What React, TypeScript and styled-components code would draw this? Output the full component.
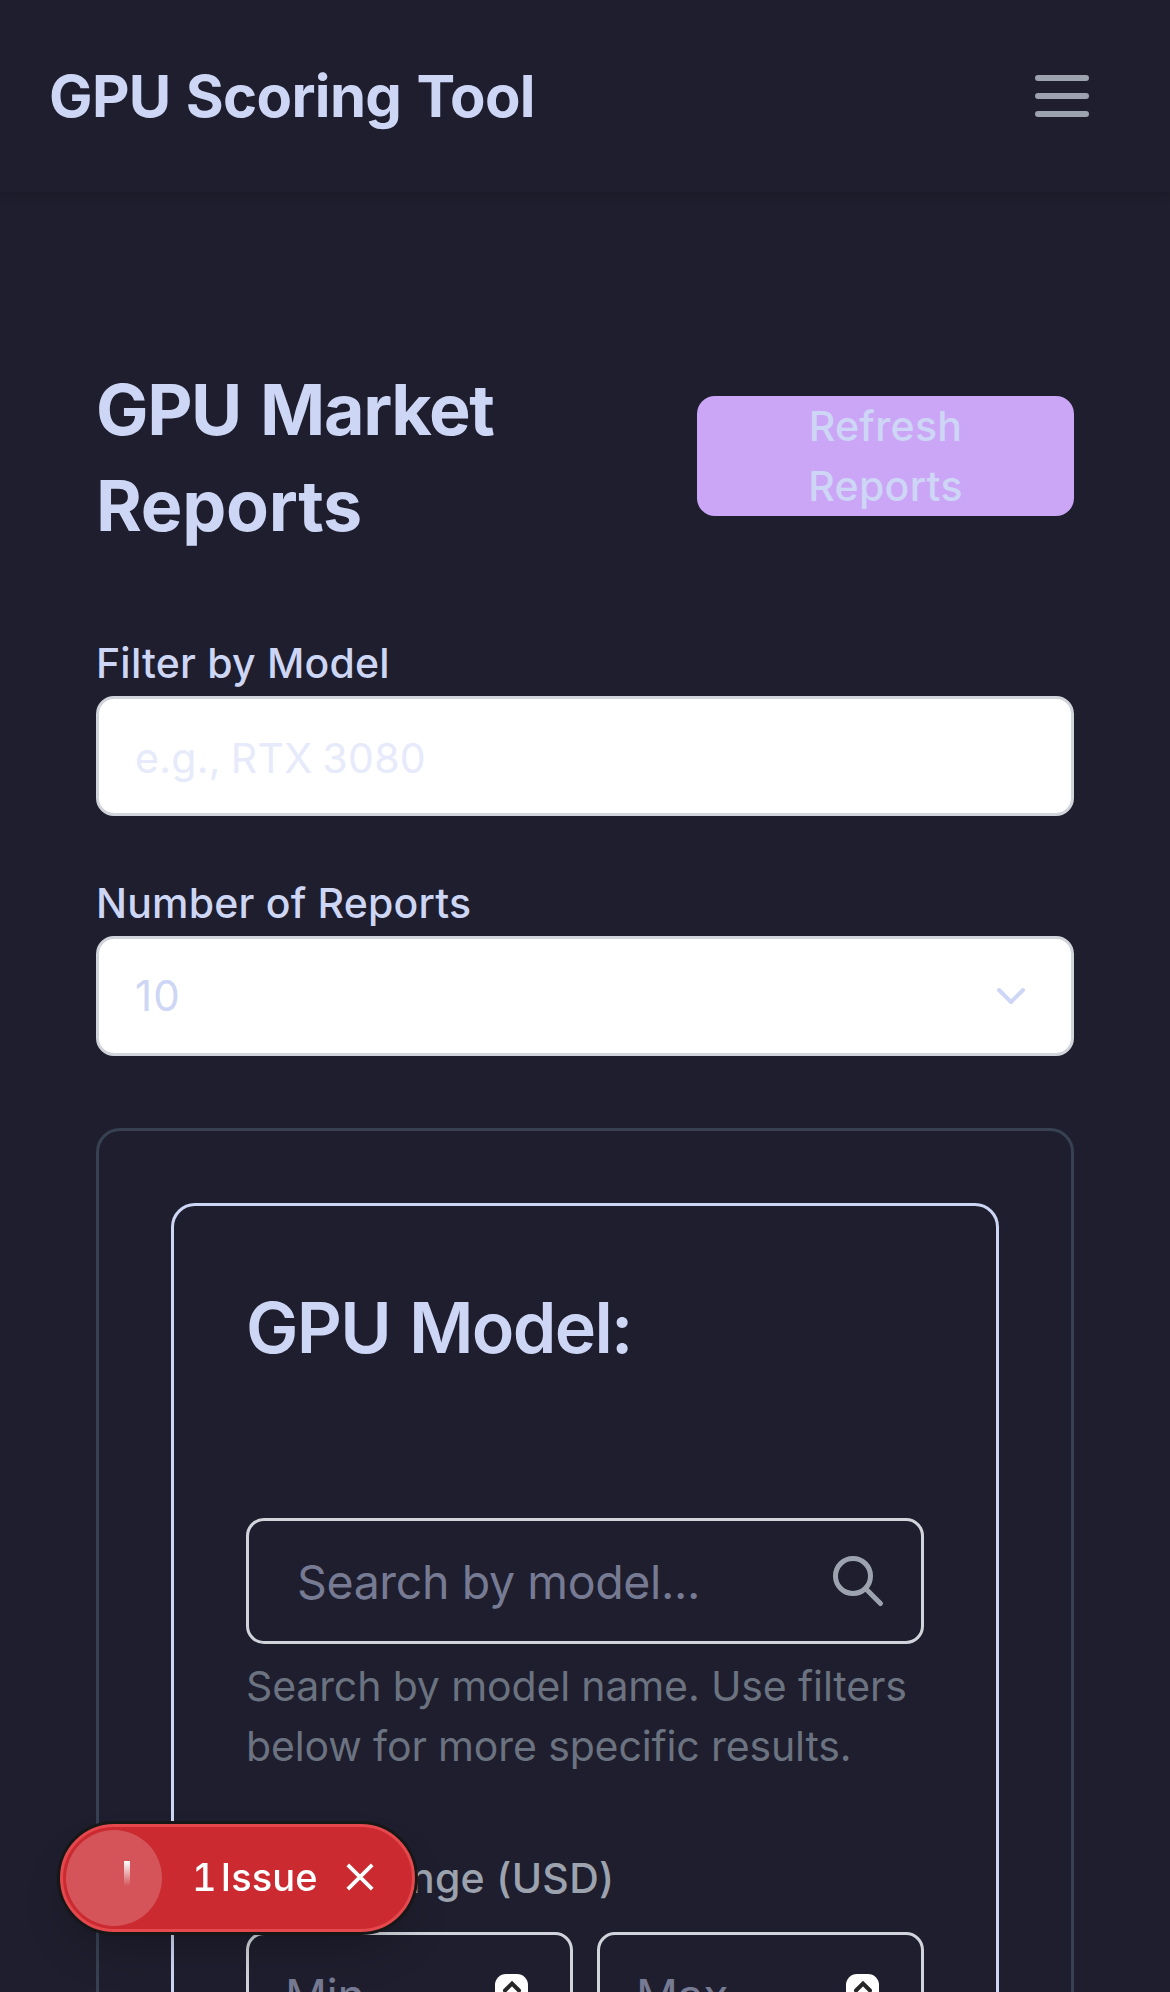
import React from 'react';
import styled, { createGlobalStyle } from 'styled-components';

const color = {
  base: '#1e1e2e',
  text: '#cdd6f4',
  mauve: '#cba6f7',
  overlay: '#767b93',
  gray300: '#d1d5db',
  gray400: '#9ca3af',
  gray500: '#6b7280',
  gray700: '#374151',
};

const GlobalStyle = createGlobalStyle`
  *, *::before, *::after { box-sizing: border-box; }
  body {
    margin: 0;
    background: ${color.base};
    color: ${color.text};
    font-family: Inter, "Liberation Sans", sans-serif;
    overflow: hidden;
  }
`;

const Page = styled.div`
  height: 1992px;
  overflow: hidden;
`;

const Header = styled.header`
  display: flex;
  align-items: center;
  justify-content: space-between;
  height: 192px;
  padding: 0 81px 0 49px;
  background: ${color.base};
  box-shadow: 0 3px 9px rgba(0, 0, 0, 0.1), 0 3px 6px -3px rgba(0, 0, 0, 0.1);
`;

const Brand = styled.span`
  font-size: 58px;
  line-height: 84px;
  font-weight: 650;
  letter-spacing: -0.65px;
  word-spacing: 2px;
`;

const MenuButton = styled.button`
  display: flex;
  flex-direction: column;
  gap: 12px;
  padding: 0;
  border: 0;
  background: none;
`;

const MenuBar = styled.span`
  width: 54px;
  height: 6px;
  border-radius: 3px;
  background: ${color.gray400};
`;

const Main = styled.main`
  padding: 168px 96px 0;
`;

const TitleRow = styled.div`
  display: flex;
  align-items: center;
  justify-content: space-between;
  height: 192px;
`;

const PageTitle = styled.h1`
  width: 480px;
  margin: 0;
  padding-top: 3px;
  font-size: 70px;
  line-height: 96px;
  font-weight: 700;
`;

const TitleLine = styled.span<{ $spacing: number }>`
  display: block;
  letter-spacing: ${(p) => p.$spacing}px;
  word-spacing: 4px;
`;

const RefreshButton = styled.button`
  width: 377px;
  height: 120px;
  padding: 0 84px;
  border: 0;
  border-radius: 18px;
  background: ${color.mauve};
  color: ${color.text};
  font-family: inherit;
  font-size: 41px;
  line-height: 60px;
  font-weight: 500;
  letter-spacing: 0.3px;
  text-align: center;
`;

const Filters = styled.div`
  display: flex;
  flex-direction: column;
  gap: 48px;
  padding: 72px 0;
`;

const Field = styled.div`
  display: flex;
  flex-direction: column;
`;

const FieldLabel = styled.label`
  height: 72px;
  padding-top: 9px;
  font-size: 41px;
  line-height: 60px;
  font-weight: 500;
  letter-spacing: 0.2px;
`;

const TextInput = styled.input`
  width: 100%;
  height: 120px;
  padding: 4px 36px 0;
  border: 3px solid ${color.gray300};
  border-radius: 18px;
  background: #fff;
  color: ${color.text};
  font-family: inherit;
  font-size: 41px;
  letter-spacing: 0.3px;
  word-spacing: -2px;
  outline: 0;
  &::placeholder {
    color: #e6eafa;
    opacity: 1;
  }
`;

const SelectBox = styled.div`
  display: flex;
  align-items: center;
  justify-content: space-between;
  height: 120px;
  padding: 0 45px 0 36px;
  border: 3px solid ${color.gray300};
  border-radius: 18px;
  background: #fff;
  font-size: 42px;
  line-height: 60px;
  letter-spacing: 1.2px;
`;

const Card = styled.section<{ $border: string; $height: number }>`
  height: ${(p) => p.$height}px;
  padding: 72px;
  border: 3px solid ${(p) => p.$border};
  border-radius: 24px;
`;

const CardTitle = styled.h2`
  height: 240px;
  margin: 0;
  padding-top: 2px;
  font-size: 70px;
  line-height: 96px;
  font-weight: 600;
  letter-spacing: -1.7px;
  word-spacing: 3px;
`;

const SearchBox = styled.div`
  display: flex;
  align-items: center;
  height: 126px;
  padding: 0 33px 0 48px;
  border: 3px solid ${color.gray300};
  border-radius: 18px;
`;

const BareInput = styled.input`
  flex: 1;
  min-width: 0;
  padding: 2px 0 0;
  border: 0;
  outline: 0;
  background: transparent;
  color: ${color.text};
  font-family: inherit;
  font-size: 46.5px;
  letter-spacing: -0.38px;
  &::placeholder {
    color: ${color.overlay};
    opacity: 1;
  }
`;

const Hint = styled.p`
  margin: 12px 0 72px;
  color: ${color.gray500};
  font-size: 41px;
  line-height: 60px;
  letter-spacing: -0.13px;
`;

const RangeLabel = styled.div`
  margin-bottom: 24px;
  color: ${color.gray400};
  font-size: 41px;
  line-height: 60px;
  font-weight: 500;
  letter-spacing: 0.32px;
`;

const RangeRow = styled.div`
  display: grid;
  grid-template-columns: repeat(2, minmax(0, 1fr));
  gap: 24px;
`;

const NumberBox = styled.div`
  display: flex;
  align-items: center;
  height: 126px;
  padding: 0 42px 0 36px;
  border: 3px solid ${color.gray300};
  border-radius: 18px;
`;

const Spinner = styled.span`
  flex: none;
  display: flex;
  justify-content: center;
  width: 33px;
  height: 42px;
  padding-top: 6px;
  border-radius: 11px;
  background: #fff;
`;

const IssueBadge = styled.aside`
  position: fixed;
  left: 60px;
  top: 1824px;
  display: flex;
  align-items: center;
  width: 355px;
  height: 108px;
  padding-left: 3px;
  border: 3px solid #e5484d;
  border-radius: 54px;
  background: #ca2a30;
  color: #fff;
  box-shadow: 0 0 0 3px #171717, 0 3px 6px rgba(0, 0, 0, 0.1),
    0 24px 48px -12px rgba(0, 0, 0, 0.24);
`;

const BadgeMark = styled.span`
  flex: none;
  display: flex;
  width: 96px;
  height: 96px;
  padding: 31px 0 0 58px;
  border-radius: 50%;
  background: rgba(255, 255, 255, 0.2);
`;

const MarkStroke = styled.span`
  width: 6px;
  height: 25px;
  background: linear-gradient(#fff, rgba(255, 255, 255, 0));
`;

const BadgeText = styled.span`
  display: flex;
  gap: 4px;
  margin-left: 30px;
  padding-bottom: 3px;
  font-size: 38px;
  line-height: 48px;
  font-weight: 550;
  letter-spacing: 0.1px;
`;

const BadgeCount = styled.span`
  font-variant-numeric: tabular-nums;
`;

const CloseButton = styled.button`
  display: flex;
  margin: 0 0 2px 28px;
  padding: 0;
  border: 0;
  background: none;
`;

function ChevronDown() {
  return (
    <svg width="30" height="18" viewBox="0 0 30 18" fill="none" stroke={color.text} strokeWidth="4" strokeLinecap="round" strokeLinejoin="round">
      <path d="M3 3l12 12L27 3" />
    </svg>
  );
}

function ChevronUp() {
  return (
    <svg width="20" height="14" viewBox="0 0 20 14" fill="none" stroke="#262626" strokeWidth="4" strokeLinecap="round" strokeLinejoin="miter">
      <path d="M3 10.5l7-7 7 7" />
    </svg>
  );
}

function SearchIcon() {
  return (
    <svg width="60" height="60" viewBox="0 0 24 24" fill="none" stroke={color.gray400} strokeWidth="2" strokeLinecap="round" strokeLinejoin="round">
      <path d="M21 21l-6-6m2-5a7 7 0 11-14 0 7 7 0 0114 0z" />
    </svg>
  );
}

function CloseIcon() {
  return (
    <svg width="28" height="28" viewBox="0 0 28 28" fill="none" stroke="#fff" strokeWidth="3.8">
      <path d="M1.8 1.8l24.4 24.4M26.2 1.8L1.8 26.2" />
    </svg>
  );
}

function NumberField({ placeholder }: { placeholder: string }) {
  return (
    <NumberBox>
      <BareInput placeholder={placeholder} />
      <Spinner>
        <ChevronUp />
      </Spinner>
    </NumberBox>
  );
}

export default function App() {
  return (
    <Page>
      <GlobalStyle />
      <Header>
        <Brand>GPU Scoring Tool</Brand>
        <MenuButton aria-label="Menu">
          <MenuBar />
          <MenuBar />
          <MenuBar />
        </MenuButton>
      </Header>
      <Main>
        <TitleRow>
          <PageTitle>
            <TitleLine $spacing={-1.4}>GPU Market</TitleLine>
            <TitleLine $spacing={-0.31}>Reports</TitleLine>
          </PageTitle>
          <RefreshButton>Refresh Reports</RefreshButton>
        </TitleRow>
        <Filters>
          <Field>
            <FieldLabel htmlFor="model">Filter by Model</FieldLabel>
            <TextInput id="model" placeholder="e.g., RTX 3080" />
          </Field>
          <Field>
            <FieldLabel>Number of Reports</FieldLabel>
            <SelectBox>
              <span>10</span>
              <ChevronDown />
            </SelectBox>
          </Field>
        </Filters>
        <Card $border={color.gray700} $height={1200}>
          <Card $border={color.text} $height={1050}>
            <CardTitle>GPU Model:</CardTitle>
            <SearchBox>
              <BareInput placeholder="Search by model..." />
              <SearchIcon />
            </SearchBox>
            <Hint>Search by model name. Use filters below for more specific results.</Hint>
            <RangeLabel>Price Range (USD)</RangeLabel>
            <RangeRow>
              <NumberField placeholder="Min" />
              <NumberField placeholder="Max" />
            </RangeRow>
          </Card>
        </Card>
      </Main>
      <IssueBadge>
        <BadgeMark>
          <MarkStroke />
        </BadgeMark>
        <BadgeText>
          <BadgeCount>1</BadgeCount>
          <span>Issue</span>
        </BadgeText>
        <CloseButton aria-label="Close">
          <CloseIcon />
        </CloseButton>
      </IssueBadge>
    </Page>
  );
}
